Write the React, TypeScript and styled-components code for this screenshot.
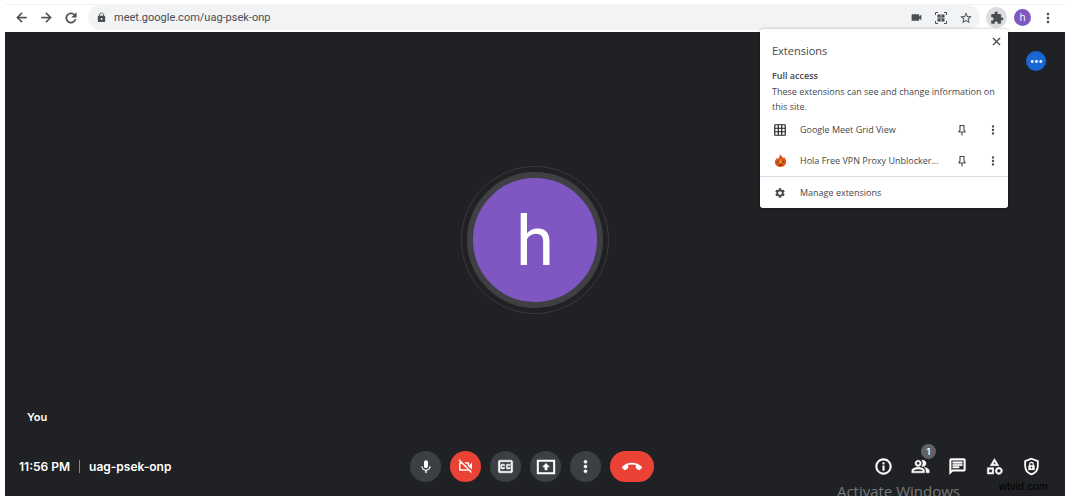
import React from "react";
import styled, { createGlobalStyle, css } from "styled-components";
import {
  MdArrowBack,
  MdArrowForward,
  MdCallEnd,
  MdClose,
  MdExtension,
  MdGridOn,
  MdInfoOutline,
  MdLock,
  MdMic,
  MdMoreHoriz,
  MdMoreVert,
  MdOutlineCategory,
  MdOutlineChat,
  MdOutlineClosedCaption,
  MdOutlinePeopleAlt,
  MdOutlineVideocamOff,
  MdRefresh,
  MdSettings,
  MdStarBorder,
  MdVideocam,
} from "react-icons/md";

const GlobalStyle = createGlobalStyle`
  * { box-sizing: border-box; }
  body {
    margin: 0;
    background: #fff;
    font-family: "Open Sans", "Noto Sans", sans-serif;
  }
  button {
    border: 0;
    padding: 0;
    background: none;
    font: inherit;
    color: inherit;
    cursor: pointer;
  }
`;

/* Thickens a filled icon, leaving its transparent bounding path alone. */
const heavyIcon = css`
  svg[fill="currentColor"] > :not([fill="none"]) {
    stroke: currentColor;
    stroke-width: 0.6px;
  }
`;

const Browser = styled.div`
  position: relative;
  display: flex;
  flex-direction: column;
  min-height: 100vh;
  padding: 4px 2px 0 5px;
`;

const Toolbar = styled.header`
  display: flex;
  align-items: stretch;
  height: 28px;
  padding-bottom: 2px;
  border-top: 1px solid #f1f3f4;
  color: #4a4d51;
`;

const ToolbarGroup = styled.div`
  display: flex;
  align-items: center;
  gap: 9px;
  padding: 0 9px 0 8px;
`;

const ToolButton = styled.button<{ $active?: boolean; $heavy?: boolean }>`
  display: flex;
  align-items: center;
  justify-content: center;
  width: ${(p) => (p.$active ? 21 : 16)}px;
  height: ${(p) => (p.$active ? 21 : 16)}px;
  margin: ${(p) => (p.$active ? "0 -2px" : "0")};
  border-radius: 50%;
  background: ${(p) => (p.$active ? "#dcdde0" : "transparent")};
  flex: none;
  ${(p) => p.$heavy && heavyIcon}
`;

const AddressBar = styled.div`
  display: flex;
  flex: 1;
  align-items: center;
  gap: 7px;
  min-width: 0;
  padding: 0 6px 0 8px;
  border-radius: 13px;
  background: #f1f3f4;
`;

const Address = styled.input`
  flex: 1;
  min-width: 0;
  border: 0;
  padding: 0;
  outline: 0;
  background: none;
  font: 11px Roboto, "Noto Sans", sans-serif;
  color: #4a4d51;
`;

const AddressActions = styled.div`
  display: flex;
  gap: 9px;
`;

const Profile = styled.button`
  width: 17px;
  height: 17px;
  border-radius: 50%;
  background: #7e57c2;
  color: #fff;
  font-size: 10px;
  line-height: 17px;
`;

const Popup = styled.section`
  position: absolute;
  z-index: 2;
  top: 29px;
  right: 59px;
  width: 248px;
  border-radius: 3px;
  background: #fff;
  color: #45484c;
  font-size: 9px;
  line-height: 16px;
  box-shadow: 0 0 3px rgba(0, 0, 0, 0.3);
`;

const PopupHead = styled.div`
  display: flex;
  justify-content: space-between;
  align-items: flex-start;
  padding: 4px 4px 0 12px;
`;

const PopupTitle = styled.h1`
  margin: 10px 0 0;
  font-size: 11px;
  font-weight: 400;
  line-height: 16px;
`;

const Access = styled.div`
  padding: 9px 12px 0;

  h2 {
    margin: 0;
    font-size: 9px;
    font-weight: 600;
    line-height: 16px;
  }
  p {
    margin: 0;
    line-height: 15px;
  }
`;

const ExtensionList = styled.ul`
  margin: 0;
  padding: 0;
  list-style: none;
`;

const ExtensionRow = styled.li`
  display: flex;
  align-items: center;
  height: 31px;
  padding: 0 7px 0 13px;
`;

const ExtensionName = styled.span`
  flex: 1;
  padding-left: 13px;
`;

const RowActions = styled.span`
  display: flex;
  gap: 15px;
`;

const ManageButton = styled.button`
  display: flex;
  align-items: center;
  gap: 13px;
  width: 100%;
  height: 32px;
  padding: 0 13px;
  border-top: 1px solid #dadce0;
`;

const IconSlot = styled.span`
  display: flex;
  align-items: center;
  justify-content: center;
  width: 14px;
`;

const Stage = styled.main`
  position: relative;
  display: flex;
  flex: 1;
  flex-direction: column;
  overflow: hidden;
  background: #202124;
  color: #fff;
  font-family: "Inter", "Liberation Sans", sans-serif;
`;

const Tile = styled.section`
  display: grid;
  flex: 1;
  grid-template-rows: 1fr auto 1fr;
  justify-items: center;
`;

const AvatarRing = styled.div`
  grid-row: 2;
  padding: 5px;
  border: 1px solid #393a3e;
  border-radius: 50%;
`;

const Avatar = styled.div`
  width: 136px;
  height: 136px;
  border: 6px solid #404044;
  border-radius: 50%;
  background: #7e57c2;
  font-family: Roboto, sans-serif;
  font-size: 69px;
  line-height: 128px;
  text-align: center;
`;

const TileName = styled.span`
  grid-row: 3;
  align-self: end;
  justify-self: start;
  padding: 0 22px 23px;
  font-size: 11px;
  font-weight: 600;
  line-height: 16px;
`;

const MoreBubble = styled.button`
  position: absolute;
  top: 19px;
  right: 19px;
  display: flex;
  align-items: center;
  justify-content: center;
  width: 20px;
  height: 20px;
  border-radius: 50%;
  background: #1967d2;
  color: #fff;
`;

const BottomBar = styled.footer`
  display: grid;
  grid-template-columns: 1fr auto 1fr;
  align-items: center;
  padding: 3px 20px 14px 14px;
`;

const MeetingInfo = styled.div`
  display: flex;
  align-items: center;
  font-size: 12px;
  font-weight: 600;
  line-height: 16px;
`;

const MeetingCode = styled.span`
  margin-left: 9px;
  padding-left: 9px;
  border-left: 1px solid #85878a;
  line-height: 13px;
`;

const Controls = styled.div`
  display: flex;
  gap: 9px;
`;

const ControlButton = styled.button<{ $danger?: boolean; $wide?: boolean; $heavy?: boolean }>`
  display: flex;
  align-items: center;
  justify-content: center;
  width: ${(p) => (p.$wide ? 44 : 31)}px;
  height: 31px;
  border-radius: 16px;
  background: ${(p) => (p.$danger ? "#ea4335" : "#3c4043")};
  ${(p) => p.$heavy && heavyIcon}
`;

const Panels = styled.div`
  display: flex;
  justify-content: flex-end;
  gap: 10px;
`;

const PanelButton = styled.button`
  position: relative;
  display: flex;
  align-items: center;
  justify-content: center;
  width: 27px;
  height: 27px;
  ${heavyIcon}
`;

const Badge = styled.span`
  position: absolute;
  top: -9px;
  right: -2px;
  width: 15px;
  height: 15px;
  border-radius: 50%;
  background: #5f6368;
  font-size: 9px;
  font-weight: 600;
  line-height: 15px;
`;

const ActivationNotice = styled.div`
  position: absolute;
  right: 105px;
  bottom: -5px;
  color: #77797b;
  font-family: "Open Sans", sans-serif;
  font-size: 15px;
  line-height: 20px;
`;

const SiteMark = styled.div`
  position: absolute;
  right: 17px;
  bottom: 2px;
  color: #000;
  font-family: "Liberation Sans", sans-serif;
  font-size: 11px;
  line-height: 15px;
`;

const QrIcon = () => (
  <svg width="12" height="12" viewBox="0 0 24 24" fill="none" stroke="currentColor" strokeWidth="2" aria-hidden="true">
    <path d="M1 6V1h5M18 1h5v5M23 18v5h-5M6 23H1v-5" />
    <path d="M5 5h6v6H5zM13 5h6v6h-6zM5 13h6v6H5zM13 13h6v6h-6z" fill="currentColor" stroke="none" />
    <path d="M12 5v14M5 12h14" strokeWidth="1" />
  </svg>
);

const PinIcon = () => (
  <svg width="12" height="12" viewBox="0 0 24 24" fill="none" stroke="currentColor" strokeWidth="2.2" aria-hidden="true">
    <path d="M7 3h10M8 3v9l-2 3v1h12v-1l-2-3V3M12 16v7" />
  </svg>
);

const FlameIcon = () => (
  <svg width="13" height="13" viewBox="0 0 24 24" aria-hidden="true">
    <path d="M11 0c1 4 5 4 6 8l2-2c3 4 4 7 3 11-1 4-5 7-10 7S3 21 2 17c-1-4 1-7 4-10l1 3c2-3 4-5 4-10z" fill="#d9541e" />
    <path d="M12 9c2 3 4 5 4 8 0 2-1 4-4 4s-4-2-4-4c0-3 3-4 4-8z" fill="#f28c1c" />
    <path d="M6 12l4 3-4 1zM18 12l-4 3 4 1zM7 18h10l-5 4z" fill="#8a2c10" />
  </svg>
);

const PresentIcon = () => (
  <svg width="20" height="20" viewBox="0 0 24 24" fill="none" stroke="currentColor" strokeWidth="2.4" aria-hidden="true">
    <path d="M2.200 4.500h19.600v15H2.200z" />
    <path d="M12 7.500l4 4.500h-2.600v3.500h-2.800V12H8z" fill="currentColor" strokeWidth="0.5" />
  </svg>
);

const ShieldIcon = () => (
  <svg width="19" height="19" viewBox="0 0 24 24" fill="none" stroke="currentColor" strokeWidth="2.3" aria-hidden="true">
    <path d="M12 2.200l8 3v6c0 5-3.400 9.200-8 10.600-4.600-1.400-8-5.600-8-10.600v-6z" />
    <path d="M8 10.500h8V16.500H8z" fill="currentColor" stroke="none" />
    <path d="M9.800 11V9a2.200 2.200 0 0 1 4.400 0v2" strokeWidth="1.600" />
    <circle cx="12" cy="13.500" r="1.100" fill="#202124" stroke="none" />
  </svg>
);

const extensions = [
  { name: "Google Meet Grid View", icon: <MdGridOn size={14} color="#202124" /> },
  { name: "Hola Free VPN Proxy Unblocker...", icon: <FlameIcon /> },
];

export default function App() {
  return (
    <>
      <GlobalStyle />
      <Browser>
        <Toolbar>
          <ToolbarGroup>
            <ToolButton $heavy aria-label="Back"><MdArrowBack size={15} /></ToolButton>
            <ToolButton $heavy aria-label="Forward"><MdArrowForward size={15} /></ToolButton>
            <ToolButton $heavy aria-label="Reload"><MdRefresh size={16} /></ToolButton>
          </ToolbarGroup>
          <AddressBar>
            <MdLock size={11} />
            <Address aria-label="Address" defaultValue="meet.google.com/uag-psek-onp" />
            <AddressActions>
              <ToolButton aria-label="Camera access"><MdVideocam size={13} /></ToolButton>
              <ToolButton aria-label="QR code"><QrIcon /></ToolButton>
              <ToolButton aria-label="Bookmark"><MdStarBorder size={14} /></ToolButton>
            </AddressActions>
          </AddressBar>
          <ToolbarGroup as="nav">
            <ToolButton $active aria-label="Extensions"><MdExtension size={14} /></ToolButton>
            <Profile aria-label="Profile">h</Profile>
            <ToolButton aria-label="Menu"><MdMoreVert size={16} /></ToolButton>
          </ToolbarGroup>
        </Toolbar>

        <Popup aria-label="Extensions">
          <PopupHead>
            <PopupTitle>Extensions</PopupTitle>
            <ToolButton $heavy aria-label="Close"><MdClose size={13} /></ToolButton>
          </PopupHead>
          <Access>
            <h2>Full access</h2>
            <p>These extensions can see and change information on this site.</p>
          </Access>
          <ExtensionList>
            {extensions.map((e) => (
              <ExtensionRow key={e.name}>
                <IconSlot>{e.icon}</IconSlot>
                <ExtensionName>{e.name}</ExtensionName>
                <RowActions>
                  <ToolButton aria-label={`Pin ${e.name}`}><PinIcon /></ToolButton>
                  <ToolButton aria-label={`More for ${e.name}`}><MdMoreVert size={14} /></ToolButton>
                </RowActions>
              </ExtensionRow>
            ))}
          </ExtensionList>
          <ManageButton>
            <IconSlot><MdSettings size={12} /></IconSlot>
            Manage extensions
          </ManageButton>
        </Popup>

        <Stage>
          <Tile>
            <AvatarRing><Avatar>h</Avatar></AvatarRing>
            <TileName>You</TileName>
          </Tile>
          <MoreBubble aria-label="More options"><MdMoreHoriz size={17} /></MoreBubble>
          <BottomBar>
            <MeetingInfo>
              <span>11:56 PM</span>
              <MeetingCode>uag-psek-onp</MeetingCode>
            </MeetingInfo>
            <Controls>
              <ControlButton aria-label="Microphone"><MdMic size={16} /></ControlButton>
              <ControlButton $danger aria-label="Camera off"><MdOutlineVideocamOff size={17} /></ControlButton>
              <ControlButton $heavy aria-label="Captions"><MdOutlineClosedCaption size={19} /></ControlButton>
              <ControlButton aria-label="Present now"><PresentIcon /></ControlButton>
              <ControlButton $heavy aria-label="More"><MdMoreVert size={19} /></ControlButton>
              <ControlButton $danger $wide aria-label="Leave call"><MdCallEnd size={20} /></ControlButton>
            </Controls>
            <Panels>
              <PanelButton aria-label="Meeting details"><MdInfoOutline size={19} /></PanelButton>
              <PanelButton aria-label="People"><MdOutlinePeopleAlt size={19} /><Badge>1</Badge></PanelButton>
              <PanelButton aria-label="Chat"><MdOutlineChat size={19} /></PanelButton>
              <PanelButton aria-label="Activities"><MdOutlineCategory size={19} /></PanelButton>
              <PanelButton aria-label="Host controls"><ShieldIcon /></PanelButton>
            </Panels>
          </BottomBar>
          <ActivationNotice>Activate Windows</ActivationNotice>
          <SiteMark>wtvid.com</SiteMark>
        </Stage>
      </Browser>
    </>
  );
}
